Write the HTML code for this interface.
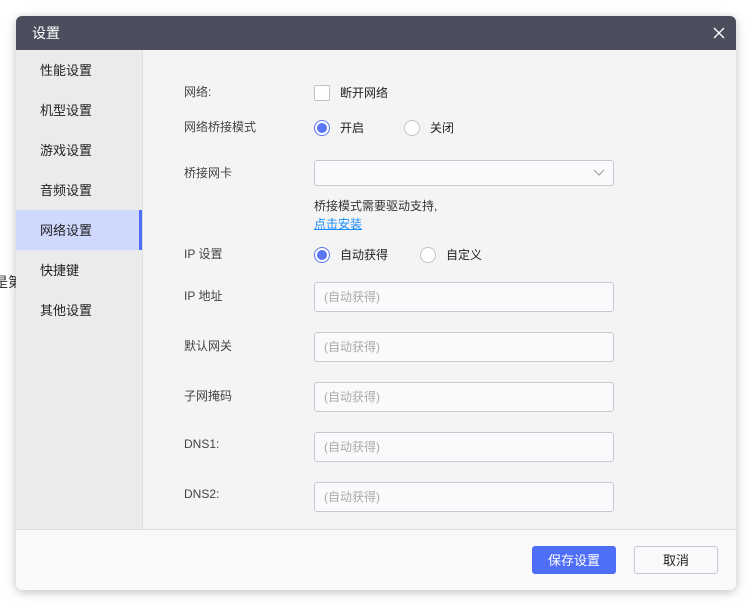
<!DOCTYPE html>
<html><head><meta charset="utf-8"><style>
*{box-sizing:border-box;margin:0;padding:0}
body{width:756px;height:610px;background:#fff;position:relative;overflow:hidden;font-family:"Liberation Sans","Noto Sans CJK SC",sans-serif;font-size:13px;color:#333}
.bgtxt{position:absolute;left:-6px;top:272px;font-size:14px;color:#333}
.dlg{position:absolute;left:16px;top:16px;width:720px;height:574px;border-radius:6px;overflow:hidden;background:#f4f4f4;box-shadow:0 2px 10px rgba(0,0,0,.25)}
.hd{height:34px;background:#4b4e5c;color:#fff;font-size:14px;line-height:35px;padding-left:16px;position:relative}
.x{position:absolute;right:11px;top:11px;width:12px;height:12px}
.side{position:absolute;left:0;top:34px;width:127px;height:479px;background:#ebebed;border-right:1px solid #ddd}
.side div{height:40px;line-height:41px;padding-left:24px;font-size:13px;color:#222}
.side .on{background:#cfd8fd;border-right:3px solid #4f6ef7}
.lbl{position:absolute;left:168px;font-size:12px;color:#444}
.ctl{position:absolute;left:298px}
.inp{position:absolute;left:298px;width:300px;height:30px;background:#f9fafc;border:1px solid #c8c9d2;border-radius:3px;font-size:12px;color:#aaa;line-height:28px;padding-left:9px}
.rad{display:inline-block;width:16px;height:16px;border-radius:50%;border:1px solid #c0c2cc;background:#fff;vertical-align:middle;position:relative}
.rad.on{border-color:#5a75f5}
.rad.on:after{content:"";position:absolute;left:2px;top:2px;width:10px;height:10px;border-radius:50%;background:#5a75f5}
.t{font-size:12px;color:#222;vertical-align:middle;margin-left:10px}
.ft{position:absolute;left:0;top:513px;width:720px;height:61px;background:#f9f9f9;border-top:1px solid #ddd}
.b1{position:absolute;left:516px;top:16px;width:84px;height:28px;background:#4f6ef7;color:#fff;border-radius:3px;text-align:center;line-height:29px}
.b2{position:absolute;left:618px;top:16px;width:84px;height:28px;background:#f9fafc;border:1px solid #c8c9d2;color:#222;border-radius:3px;text-align:center;line-height:27px}
</style></head><body>
<div class="bgtxt">是第</div>
<div class="dlg">
<div class="hd">设置<svg class="x" viewBox="0 0 12 12"><path d="M1 1L11 11M11 1L1 11" stroke="#fff" stroke-width="1.3"/></svg></div>
<div class="side">
<div>性能设置</div><div>机型设置</div><div>游戏设置</div><div>音频设置</div><div class="on">网络设置</div><div>快捷键</div><div>其他设置</div>
</div>
<div class="lbl" style="top:67px">网络:</div>
<div class="ctl" style="top:68px"><span style="display:inline-block;width:16px;height:16px;border:1px solid #c0c2cc;border-radius:2px;background:#fff;vertical-align:middle"></span><span class="t">断开网络</span></div>
<div class="lbl" style="top:102px">网络桥接模式</div>
<div class="ctl" style="top:103px"><span class="rad on"></span><span class="t">开启</span><span class="rad" style="margin-left:40px"></span><span class="t">关闭</span></div>
<div class="lbl" style="top:148px">桥接网卡</div>
<div class="inp" style="top:144px;height:26px"><svg style="position:absolute;right:8px;top:8px" width="12" height="8" viewBox="0 0 12 8"><path d="M1 1L6 6L11 1" fill="none" stroke="#999" stroke-width="1"/></svg></div>
<div class="ctl" style="top:181px;font-size:12px;color:#333">桥接模式需要驱动支持,</div>
<div class="ctl" style="top:199px;font-size:12px;color:#1a8cff;text-decoration:underline">点击安装</div>
<div class="lbl" style="top:229px">IP 设置</div>
<div class="ctl" style="top:230px"><span class="rad on"></span><span class="t">自动获得</span><span class="rad" style="margin-left:32px"></span><span class="t">自定义</span></div>
<div class="lbl" style="top:271px">IP 地址</div>
<div class="inp" style="top:266px">(自动获得)</div>
<div class="lbl" style="top:321px">默认网关</div>
<div class="inp" style="top:316px">(自动获得)</div>
<div class="lbl" style="top:371px">子网掩码</div>
<div class="inp" style="top:366px">(自动获得)</div>
<div class="lbl" style="top:421px">DNS1:</div>
<div class="inp" style="top:416px">(自动获得)</div>
<div class="lbl" style="top:471px">DNS2:</div>
<div class="inp" style="top:466px">(自动获得)</div>
<div class="ft"><div class="b1">保存设置</div><div class="b2">取消</div></div>
</div>
</body></html>
